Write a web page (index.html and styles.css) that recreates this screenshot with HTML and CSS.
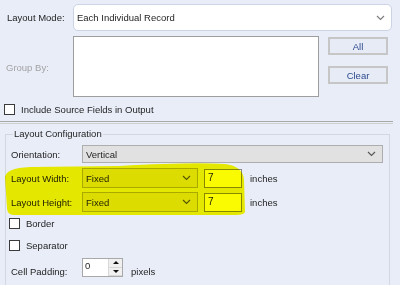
FILE: index.html
```html
<!DOCTYPE html>
<html lang="en">
<head>
    <meta charset="UTF-8">
    <title>Layout Configuration</title>
    <link rel="stylesheet" href="styles.css">
</head>
<body>

<div class="panel">
    <div class="mode-row">
        <span class="field-label">Layout Mode:</span>
        <div class="combo">
            <span>Each Individual Record</span>
            <svg class="chevron" width="9" height="6" viewBox="0 0 9 6"><path d="M1 1 L4.5 4.5 L8 1" fill="none" stroke="#7a7a7a" stroke-width="1.1"/></svg>
        </div>
    </div>

    <div class="group-row">
        <span class="field-label muted">Group By:</span>
        <div class="listbox"></div>
        <div class="side-buttons">
            <button class="win-button">All</button>
            <button class="win-button">Clear</button>
        </div>
    </div>

    <label class="check-row include">
        <span class="checkbox"></span>
        <span>Include Source Fields in Output</span>
    </label>

    <div class="separator"></div>

    <fieldset class="group-box">
        <legend>Layout Configuration</legend>

        <div class="form-row orient">
            <span class="row-label">Orientation:</span>
            <div class="dropdown wide">
                <span>Vertical</span>
                <svg class="chevron" width="9" height="6" viewBox="0 0 9 6"><path d="M1 1 L4.5 4.5 L8 1" fill="none" stroke="#555" stroke-width="1.1"/></svg>
            </div>
        </div>

        <div class="form-row size">
            <span class="row-label">Layout Width:</span>
            <div class="dropdown narrow">
                <span>Fixed</span>
                <svg class="chevron" width="9" height="6" viewBox="0 0 9 6"><path d="M1 1 L4.5 4.5 L8 1" fill="none" stroke="#555" stroke-width="1.1"/></svg>
            </div>
            <div class="num-box">7</div>
            <span class="unit">inches</span>
        </div>

        <div class="form-row size">
            <span class="row-label">Layout Height:</span>
            <div class="dropdown narrow">
                <span>Fixed</span>
                <svg class="chevron" width="9" height="6" viewBox="0 0 9 6"><path d="M1 1 L4.5 4.5 L8 1" fill="none" stroke="#555" stroke-width="1.1"/></svg>
            </div>
            <div class="num-box">7</div>
            <span class="unit">inches</span>
        </div>

        <label class="check-row border-opt">
            <span class="checkbox"></span>
            <span>Border</span>
        </label>

        <label class="check-row sep-opt">
            <span class="checkbox"></span>
            <span>Separator</span>
        </label>

        <div class="form-row padding">
            <span class="row-label">Cell Padding:</span>
            <div class="spin">
                <span class="spin-value">0</span>
                <div class="spin-buttons">
                    <span class="spin-up"></span>
                    <span class="spin-down"></span>
                </div>
            </div>
            <span class="unit">pixels</span>
        </div>
    </fieldset>
</div>

<svg class="marker" width="400" height="285" viewBox="0 0 400 285">
    <path d="M5 178 Q5 168 30 167 L120 166 Q190 162 225 164 Q243 166 244 180 L245 212 Q244 215 236 215 L14 215 Q7 215 7 208 Z" fill="#fafa00"/>
</svg>

</body>
</html>
```

FILE: styles.css
```css
body {
    margin: 0;
    background-color: #e9edf8;
    font-family: "Liberation Sans", Arial, sans-serif;
    font-size: 9.5px;
    color: #1e1e1e;
    width: 400px;
    height: 285px;
    overflow: hidden;
}
.panel {
    padding: 4px 0 0 6px;
}
.mode-row {
    display: flex;
    align-items: center;
}
.field-label {
    width: 67px;
    flex: none;
}
.mode-row .field-label {
    padding-left: 1px;
    width: 66px;
}
.muted {
    color: #a3a3a3;
}
.combo {
    height: 25px;
    background-color: white;
    border: 1px solid #cbd3e4;
    border-radius: 5px;
    display: flex;
    align-items: center;
    justify-content: space-between;
    padding: 0 6px 0 3px;
    width: 308px;
}
.group-row {
    display: flex;
    align-items: flex-start;
    margin-top: 5px;
}
.group-row .field-label {
    align-self: center;
    padding-top: 2px;
}
.listbox {
    width: 244px;
    height: 59px;
    background-color: white;
    border: 1px solid #9e9e9e;
}
.side-buttons {
    display: flex;
    flex-direction: column;
    gap: 11px;
    margin-left: 9px;
    margin-top: 1px;
}
.win-button {
    width: 60px;
    height: 18px;
    padding: 0;
    border: 2px solid #c6c6c6;
    background-color: #e7ebf6;
    color: #2d4a8e;
    font-family: "Liberation Sans", Arial, sans-serif;
    font-size: 9.5px;
}
.check-row {
    display: flex;
    align-items: center;
    gap: 6px;
}
.checkbox {
    width: 9px;
    height: 9px;
    border: 1px solid #3a3a3a;
    background-color: white;
    flex: none;
}
.include {
    margin-top: 7px;
    margin-left: -2px;
}
.separator {
    margin: 6px 0 0 -6px;
    width: 393px;
    height: 1px;
    border-top: 1px solid #a9a9a9;
    border-bottom: 1px solid #cfcfcf;
}
.group-box {
    margin: 4px 10px 0 -1px;
    padding: 5px 6px 20px 3px;
    border: 1px solid #d3d7e0;
    border-bottom: none;
}
.group-box legend {
    padding: 0 1px;
    margin-left: 4px;
    line-height: 12px;
}
.form-row {
    display: flex;
    align-items: center;
}
.row-label {
    width: 71px;
    padding-left: 2px;
    flex: none;
}
.dropdown {
    height: 18px;
    background-color: #e1e1e1;
    border: 1px solid #adadad;
    display: flex;
    align-items: center;
    justify-content: space-between;
    padding: 0 6px 0 3px;
    box-sizing: border-box;
}
.dropdown.wide {
    flex: 1;
}
.dropdown.narrow {
    width: 116px;
    height: 20px;
}
.size {
    margin-top: 4px;
}
.orient + .size {
    margin-top: 5px;
}
.num-box {
    width: 38px;
    height: 19px;
    box-sizing: border-box;
    margin-left: 6px;
    background-color: white;
    border: 1px solid #8a8a8a;
    padding: 2px 0 0 3px;
    font-size: 10px;
}
.unit {
    margin-left: 8px;
}
.border-opt {
    margin-top: 5px;
    height: 12px;
}
.sep-opt {
    margin-top: 10px;
    height: 12px;
}
.padding {
    margin-top: 7px;
    align-items: flex-end;
}
.spin {
    width: 41px;
    height: 19px;
    box-sizing: border-box;
    background-color: white;
    border: 1px solid #a9a9a9;
    display: flex;
    justify-content: space-between;
}
.spin-value {
    padding: 1px 0 0 2px;
}
.spin-buttons {
    width: 13px;
    display: flex;
    flex-direction: column;
    border-left: 1px solid #d8d8d8;
}
.spin-up,
.spin-down {
    flex: 1;
    background-color: #f0f0f0;
    border-bottom: 1px solid #d8d8d8;
    position: relative;
}
.spin-up::after,
.spin-down::after {
    content: "";
    position: absolute;
    left: 4px;
    top: 2px;
    border-left: 3px solid transparent;
    border-right: 3px solid transparent;
}
.spin-up::after {
    border-bottom: 3px solid #111;
}
.spin-down::after {
    border-top: 3px solid #111;
}
.marker {
    position: absolute;
    left: 0;
    top: 0;
    mix-blend-mode: multiply;
    pointer-events: none;
}
```
